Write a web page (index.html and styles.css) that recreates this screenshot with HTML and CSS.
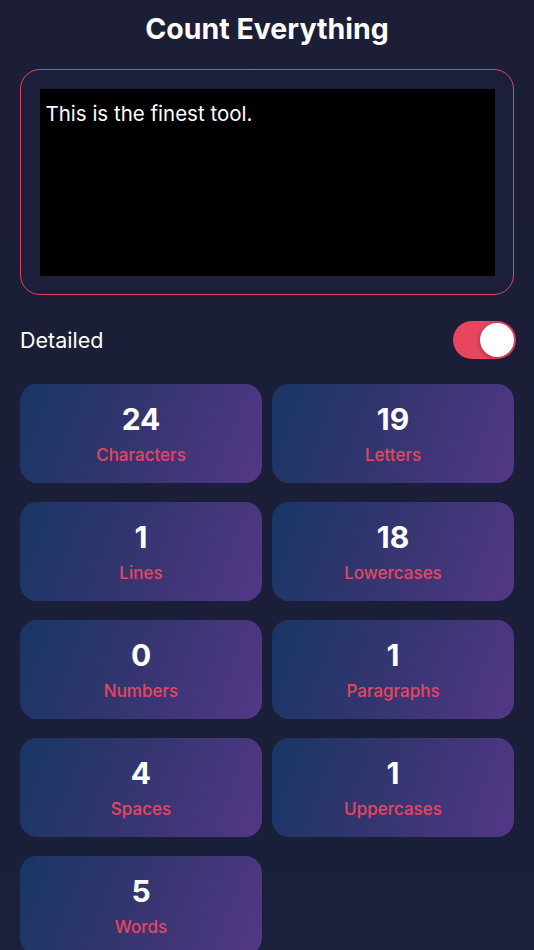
FILE: index.html
```html
<!DOCTYPE html>
<html lang="en">
<head>
<meta charset="utf-8">
<title>Count Everything</title>
<link rel="stylesheet" href="styles.css">
</head>
<body>
<main class="app">
  <h1 class="title">Count Everything</h1>
  <div class="input-frame">
    <div class="input-area">This is the finest tool.</div>
  </div>
  <div class="option-row">
    <span class="option-label">Detailed</span>
    <span class="toggle on"><span class="knob"></span></span>
  </div>
  <section class="grid">
    <div class="card"><div class="num">24</div><div class="label">Characters</div></div>
    <div class="card"><div class="num">19</div><div class="label">Letters</div></div>
    <div class="card"><div class="num">1</div><div class="label">Lines</div></div>
    <div class="card"><div class="num">18</div><div class="label">Lowercases</div></div>
    <div class="card"><div class="num">0</div><div class="label">Numbers</div></div>
    <div class="card"><div class="num">1</div><div class="label">Paragraphs</div></div>
    <div class="card"><div class="num">4</div><div class="label">Spaces</div></div>
    <div class="card"><div class="num">1</div><div class="label">Uppercases</div></div>
    <div class="card"><div class="num">5</div><div class="label">Words</div></div>
  </section>
</main>
</body>
</html>
```

FILE: styles.css
```css
html, body {
  margin: 0;
  padding: 0;
  height: 100%;
}
body {
  background: linear-gradient(180deg, #1c1e36 0%, #1a1f3a 100%);
  font-family: Inter, "Noto Sans", "Liberation Sans", sans-serif;
  color: #ffffff;
  overflow: hidden;
}
.app {
  padding: 0 20px;
}
.title {
  margin: 12px 0 0;
  font-size: 28.5px;
  line-height: 34px;
  font-weight: 700;
  text-align: center;
}
.input-frame {
  margin-top: 23px;
  height: 226px;
  box-sizing: border-box;
  border: 1.5px solid #e0455f;
  border-radius: 20px;
  padding: 18.5px;
  background: #1b1f3a;
}
.input-area {
  height: 100%;
  background: #000000;
  box-sizing: border-box;
  padding: 12px 6px;
  font-size: 20.5px;
  line-height: 25px;
  color: #ffffff;
}
.option-row {
  margin-top: 26px;
  height: 38px;
  display: flex;
  align-items: center;
  justify-content: space-between;
}
.option-label {
  font-size: 21.5px;
  font-weight: 400;
}
.toggle {
  width: 63px;
  height: 38px;
  border-radius: 19px;
  background: #e9455f;
  box-sizing: border-box;
  padding: 2px;
  display: flex;
  justify-content: flex-end;
  margin-right: -2px;
}
.knob {
  width: 34px;
  height: 34px;
  border-radius: 50%;
  background: #ffffff;
  box-shadow: -1px 1px 4px rgba(0,0,0,0.25);
}
.grid {
  margin-top: 25px;
  display: grid;
  grid-template-columns: 1fr 1fr;
  column-gap: 10px;
  row-gap: 19px;
}
.card {
  height: 99px;
  border-radius: 17px;
  background: linear-gradient(110deg, #183665 0%, #33356f 45%, #533787 100%);
  display: flex;
  flex-direction: column;
  align-items: center;
  box-sizing: border-box;
  padding-top: 17px;
}
.num {
  font-size: 30px;
  line-height: 36px;
  font-weight: 700;
  color: #ffffff;
}
.label {
  margin-top: 7px;
  font-size: 17px;
  line-height: 22px;
  font-weight: 450;
  color: #e8455f;
}
```
